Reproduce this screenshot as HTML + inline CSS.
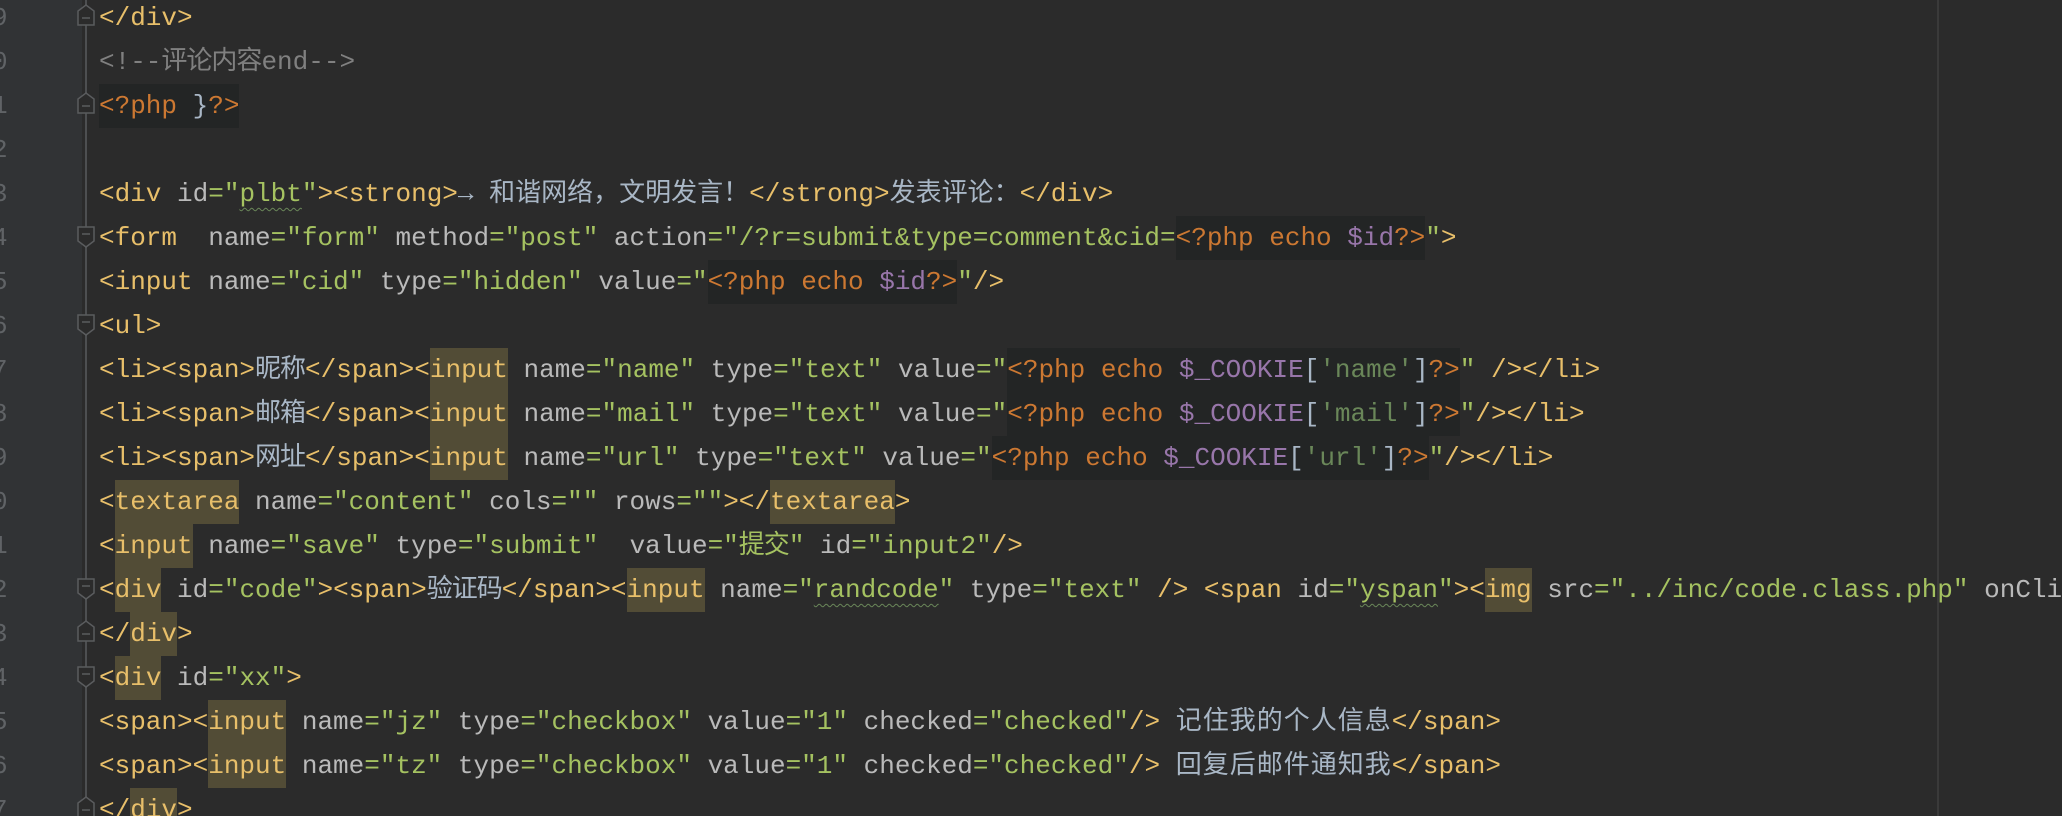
<!DOCTYPE html>
<html><head><meta charset="utf-8"><style>
html{margin:0;padding:0;width:2062px;height:816px;overflow:hidden;background:#2b2b2b;}
body{margin:0;padding:0;width:2062px;height:816px;background:#2b2b2b;overflow:hidden;position:relative;font-family:"Liberation Mono","Noto Sans CJK SC",monospace;font-size:26px;}
.g{position:absolute;left:0;top:0;width:82px;height:816px;background:#313335;}
.fl{position:absolute;left:85px;top:0;width:2px;height:816px;background:#4d4f51;}
.rl{position:absolute;left:1937px;top:0;width:2px;height:816px;background:#3a3a3a;}
.n{position:absolute;left:-8px;color:#606366;width:30px;line-height:44px;height:44px;}
.L{position:absolute;left:99px;height:44px;line-height:44px;white-space:pre;color:#a9b7c6;}
.t{color:#e8bf6a}.a{color:#bababa}.s{color:#a5c261}.k{color:#cc7832}.v{color:#9876aa}.c{color:#808080}.x{color:#a9b7c6}.q{color:#6a8759}
.h{background:#524c36;display:inline-block;height:44px}
.p{background:#232525;display:inline-block;height:44px}
.z{letter-spacing:1px}
.m{letter-spacing:-1px}
.w{text-decoration:underline wavy #6a8759;text-underline-offset:6px;text-decoration-thickness:1px}
.f{position:absolute;left:76px;width:20px;height:22px;}
</style></head><body>
<div class="g"></div>
<div class="fl"></div>
<div class="rl"></div>
<div class="n" style="top:-4px">9</div>
<div class="n" style="top:40px">0</div>
<div class="n" style="top:84px">1</div>
<div class="n" style="top:128px">2</div>
<div class="n" style="top:172px">3</div>
<div class="n" style="top:216px">4</div>
<div class="n" style="top:260px">5</div>
<div class="n" style="top:304px">6</div>
<div class="n" style="top:348px">7</div>
<div class="n" style="top:392px">8</div>
<div class="n" style="top:436px">9</div>
<div class="n" style="top:480px">0</div>
<div class="n" style="top:524px">1</div>
<div class="n" style="top:568px">2</div>
<div class="n" style="top:612px">3</div>
<div class="n" style="top:656px">4</div>
<div class="n" style="top:700px">5</div>
<div class="n" style="top:744px">6</div>
<div class="n" style="top:788px">7</div>

<svg class="f" style="top:4px" viewBox="0 0 20 22"><path d="M2,21 L2,7 L10,1 L18,7 L18,21 Z" fill="#2b2b2b" stroke="#5a5c5e" stroke-width="1.5"/><path d="M6,14 H14" stroke="#5a5c5e" stroke-width="1.5"/></svg>
<svg class="f" style="top:92px" viewBox="0 0 20 22"><path d="M2,21 L2,7 L10,1 L18,7 L18,21 Z" fill="#2b2b2b" stroke="#5a5c5e" stroke-width="1.5"/><path d="M6,14 H14" stroke="#5a5c5e" stroke-width="1.5"/></svg>
<svg class="f" style="top:226px" viewBox="0 0 20 22"><path d="M2,1 L18,1 L18,15 L10,21 L2,15 Z" fill="#2b2b2b" stroke="#5a5c5e" stroke-width="1.5"/><path d="M6,8 H14" stroke="#5a5c5e" stroke-width="1.5"/></svg>
<svg class="f" style="top:314px" viewBox="0 0 20 22"><path d="M2,1 L18,1 L18,15 L10,21 L2,15 Z" fill="#2b2b2b" stroke="#5a5c5e" stroke-width="1.5"/><path d="M6,8 H14" stroke="#5a5c5e" stroke-width="1.5"/></svg>
<svg class="f" style="top:578px" viewBox="0 0 20 22"><path d="M2,1 L18,1 L18,15 L10,21 L2,15 Z" fill="#2b2b2b" stroke="#5a5c5e" stroke-width="1.5"/><path d="M6,8 H14" stroke="#5a5c5e" stroke-width="1.5"/></svg>
<svg class="f" style="top:620px" viewBox="0 0 20 22"><path d="M2,21 L2,7 L10,1 L18,7 L18,21 Z" fill="#2b2b2b" stroke="#5a5c5e" stroke-width="1.5"/><path d="M6,14 H14" stroke="#5a5c5e" stroke-width="1.5"/></svg>
<svg class="f" style="top:666px" viewBox="0 0 20 22"><path d="M2,1 L18,1 L18,15 L10,21 L2,15 Z" fill="#2b2b2b" stroke="#5a5c5e" stroke-width="1.5"/><path d="M6,8 H14" stroke="#5a5c5e" stroke-width="1.5"/></svg>
<svg class="f" style="top:796px" viewBox="0 0 20 22"><path d="M2,21 L2,7 L10,1 L18,7 L18,21 Z" fill="#2b2b2b" stroke="#5a5c5e" stroke-width="1.5"/><path d="M6,14 H14" stroke="#5a5c5e" stroke-width="1.5"/></svg>

<div class="L" style="top:-4px"><span class="t">&lt;/div&gt;</span></div>
<div class="L" style="top:40px"><span class="c">&lt;!--<span class="m">评论内容</span>end--&gt;</span></div>
<div class="L" style="top:84px"><span class="p"><span class="k">&lt;?php </span><span class="x">}</span><span class="k">?&gt;</span></span></div>
<div class="L" style="top:172px"><span class="t">&lt;div </span><span class="a">id</span><span class="s">="<span class="w">plbt</span>"</span><span class="t">&gt;&lt;strong&gt;</span>→ 和谐网络，文明发言！<span class="t">&lt;/strong&gt;</span>发表评论：<span class="t">&lt;/div&gt;</span></div>
<div class="L" style="top:216px"><span class="t">&lt;form  </span><span class="a">name</span><span class="s">="form"</span> <span class="a">method</span><span class="s">="post"</span> <span class="a">action</span><span class="s">="/?r=submit&amp;type=comment&amp;cid=</span><span class="p"><span class="k">&lt;?php echo </span><span class="v">$id</span><span class="k">?&gt;</span></span><span class="s">"</span><span class="t">&gt;</span></div>
<div class="L" style="top:260px"><span class="t">&lt;input </span><span class="a">name</span><span class="s">="cid"</span> <span class="a">type</span><span class="s">="hidden"</span> <span class="a">value</span><span class="s">="</span><span class="p"><span class="k">&lt;?php echo </span><span class="v">$id</span><span class="k">?&gt;</span></span><span class="s">"</span><span class="t">/&gt;</span></div>
<div class="L" style="top:304px"><span class="t">&lt;ul&gt;</span></div>
<div class="L" style="top:348px"><span class="t">&lt;li&gt;&lt;span&gt;</span><span class="m">昵称</span><span class="t">&lt;/span&gt;&lt;<span class="h">input</span> </span><span class="a">name</span><span class="s">="name"</span> <span class="a">type</span><span class="s">="text"</span> <span class="a">value</span><span class="s">="</span><span class="p"><span class="k">&lt;?php echo </span><span class="v">$_COOKIE</span><span class="x">[</span><span class="q">'name'</span><span class="x">]</span><span class="k">?&gt;</span></span><span class="s">"</span><span class="t"> /&gt;&lt;/li&gt;</span></div>
<div class="L" style="top:392px"><span class="t">&lt;li&gt;&lt;span&gt;</span><span class="m">邮箱</span><span class="t">&lt;/span&gt;&lt;<span class="h">input</span> </span><span class="a">name</span><span class="s">="mail"</span> <span class="a">type</span><span class="s">="text"</span> <span class="a">value</span><span class="s">="</span><span class="p"><span class="k">&lt;?php echo </span><span class="v">$_COOKIE</span><span class="x">[</span><span class="q">'mail'</span><span class="x">]</span><span class="k">?&gt;</span></span><span class="s">"</span><span class="t">/&gt;&lt;/li&gt;</span></div>
<div class="L" style="top:436px"><span class="t">&lt;li&gt;&lt;span&gt;</span><span class="m">网址</span><span class="t">&lt;/span&gt;&lt;<span class="h">input</span> </span><span class="a">name</span><span class="s">="url"</span> <span class="a">type</span><span class="s">="text"</span> <span class="a">value</span><span class="s">="</span><span class="p"><span class="k">&lt;?php echo </span><span class="v">$_COOKIE</span><span class="x">[</span><span class="q">'url'</span><span class="x">]</span><span class="k">?&gt;</span></span><span class="s">"</span><span class="t">/&gt;&lt;/li&gt;</span></div>
<div class="L" style="top:480px"><span class="t">&lt;<span class="h">textarea</span> </span><span class="a">name</span><span class="s">="content"</span> <span class="a">cols</span><span class="s">=""</span> <span class="a">rows</span><span class="s">=""</span><span class="t">&gt;&lt;/<span class="h">textarea</span>&gt;</span></div>
<div class="L" style="top:524px"><span class="t">&lt;<span class="h">input</span> </span><span class="a">name</span><span class="s">="save"</span> <span class="a">type</span><span class="s">="submit"</span>  <span class="a">value</span><span class="s">="<span class="m">提交</span>"</span> <span class="a">id</span><span class="s">="input2"</span><span class="t">/&gt;</span></div>
<div class="L" style="top:568px"><span class="t">&lt;<span class="h">div</span> </span><span class="a">id</span><span class="s">="code"</span><span class="t">&gt;&lt;span&gt;</span><span class="m">验证码</span><span class="t">&lt;/span&gt;&lt;<span class="h">input</span> </span><span class="a">name</span><span class="s">="<span class="w">randcode</span>"</span> <span class="a">type</span><span class="s">="text"</span> <span class="t">/&gt; &lt;span </span><span class="a">id</span><span class="s">="<span class="w">yspan</span>"</span><span class="t">&gt;&lt;<span class="h">img</span> </span><span class="a">src</span><span class="s">="../inc/code.class.php"</span> <span class="a">onClick</span></div>
<div class="L" style="top:612px"><span class="t">&lt;/<span class="h">div</span>&gt;</span></div>
<div class="L" style="top:656px"><span class="t">&lt;<span class="h">div</span> </span><span class="a">id</span><span class="s">="xx"</span><span class="t">&gt;</span></div>
<div class="L" style="top:700px"><span class="t">&lt;span&gt;&lt;<span class="h">input</span> </span><span class="a">name</span><span class="s">="jz"</span> <span class="a">type</span><span class="s">="checkbox"</span> <span class="a">value</span><span class="s">="1"</span> <span class="a">checked</span><span class="s">="checked"</span><span class="t">/&gt;</span> <span class="z">记住我的个人信息</span><span class="t">&lt;/span&gt;</span></div>
<div class="L" style="top:744px"><span class="t">&lt;span&gt;&lt;<span class="h">input</span> </span><span class="a">name</span><span class="s">="tz"</span> <span class="a">type</span><span class="s">="checkbox"</span> <span class="a">value</span><span class="s">="1"</span> <span class="a">checked</span><span class="s">="checked"</span><span class="t">/&gt;</span> <span class="z">回复后邮件通知我</span><span class="t">&lt;/span&gt;</span></div>
<div class="L" style="top:788px"><span class="t">&lt;/<span class="h">div</span>&gt;</span></div>
</body></html>
